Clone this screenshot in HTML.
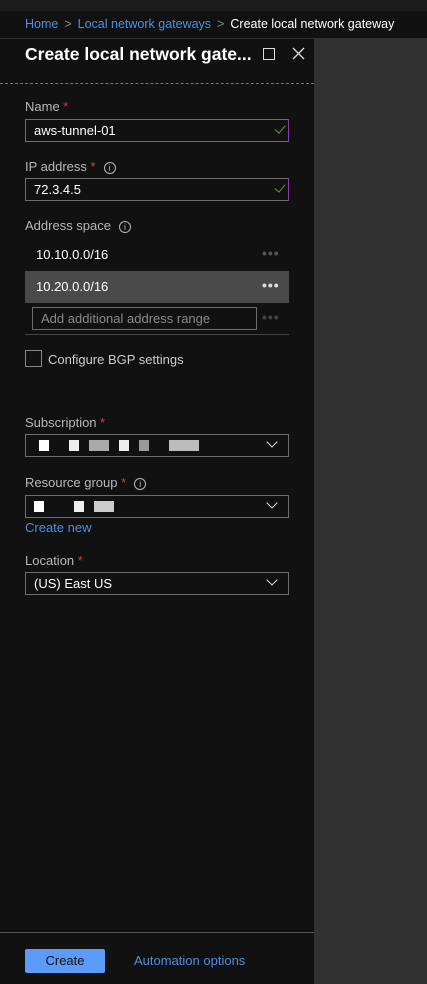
<!DOCTYPE html>
<html><head><style>
*{margin:0;padding:0;box-sizing:border-box}
body{width:427px;height:984px;background:#323232;font-family:"Liberation Sans",sans-serif;position:relative;overflow:hidden;color:#fff}
.a{position:absolute}
.top{left:0;top:0;width:427px;height:11px;background:#1c1c1c}
.bc{left:0;top:11px;width:427px;height:27px;background:#111;font-size:12.5px;line-height:27px;padding-left:25px;white-space:nowrap}
.bc .l{color:#4f8fe0}.bc .s{color:#888;margin:0 6px}
.panel{left:0;top:38px;width:314px;height:946px;background:#111;border-top:1px solid #2c2c2c}
.lab{font-size:13px;color:#b8b8b8;left:25px}
.req{color:#e03a3a}
.inp{left:25px;width:264px;height:23px;border:1px solid #6c6c6c;font-size:13px;line-height:21px;padding-left:8px;color:#fff}
.info{display:inline-block;width:12px;height:12px;border:1px solid #b8b8b8;border-radius:50%;font-size:9px;line-height:10px;text-align:center;vertical-align:middle;margin-left:8px;color:#b8b8b8}
.chk{position:absolute;right:5px;top:3px;width:6px;height:10px;border-right:1.3px solid #5aa02c;border-bottom:1.3px solid #5aa02c;transform:rotate(40deg)}
.dd{position:absolute;right:12px;top:3px;width:8px;height:8px;border-right:1.3px solid #ddd;border-bottom:1.3px solid #ddd;transform:rotate(45deg)}
.dots{font-size:14px;letter-spacing:1px;color:#ddd;font-weight:bold}
.px{position:absolute;height:11px;top:5px}
</style></head><body>
<div class="a top"></div>
<div class="a bc"><span class="l">Home</span><span class="s">&gt;</span><span class="l">Local network gateways</span><span class="s">&gt;</span>Create local network gateway</div>
<div class="a panel"></div>
<div class="a" style="left:25px;top:44px;font-size:17.5px;font-weight:bold;white-space:nowrap">Create local network gate...</div>
<div class="a" style="left:263px;top:48px;width:12px;height:12px;border:1.3px solid #ddd"></div>
<svg class="a" style="left:292px;top:47px" width="13" height="13" viewBox="0 0 13 13"><path d="M1 1L12 12M12 1L1 12" stroke="#ddd" stroke-width="1.3"/></svg>
<div class="a" style="left:0;top:83px;width:314px;border-top:1px dashed #3c8aa8"></div>

<div class="a lab" style="top:99px">Name <span class="req">*</span></div>
<div class="a inp" style="top:119px;border-right-color:#8a3aa8">aws-tunnel-01<span class="chk"></span></div>
<div class="a lab" style="top:159px">IP address <span class="req">*</span><span class="info">i</span></div>
<div class="a inp" style="top:178px;border-right-color:#8a3aa8">72.3.4.5<span class="chk"></span></div>

<div class="a lab" style="top:218px">Address space<span class="info">i</span></div>
<div class="a" style="left:36px;top:247px;font-size:13px">10.10.0.0/16</div>
<div class="a dots" style="left:262px;top:245px;color:#555">•••</div>
<div class="a" style="left:25px;top:271px;width:264px;height:32px;background:#4a4a4a"></div>
<div class="a" style="left:36px;top:279px;font-size:13px">10.20.0.0/16</div>
<div class="a dots" style="left:262px;top:277px">•••</div>
<div class="a" style="left:32px;top:307px;width:225px;height:23px;border:1px solid #6c6c6c;font-size:13px;line-height:21px;padding-left:8px;color:#8a8a8a">Add additional address range</div>
<div class="a dots" style="left:262px;top:309px;color:#444">•••</div>
<div class="a" style="left:25px;top:334px;width:264px;border-top:1px solid #444"></div>
<div class="a" style="left:25px;top:350px;width:17px;height:17px;border:1px solid #888"></div>
<div class="a" style="left:48px;top:352px;font-size:13px;color:#ccc">Configure BGP settings</div>

<div class="a lab" style="top:415px">Subscription <span class="req">*</span></div>
<div class="a inp" style="top:434px"><span class="px" style="left:13px;width:10px;background:#fff"></span><span class="px" style="left:43px;width:10px;background:#eee"></span><span class="px" style="left:63px;width:20px;background:#aaa"></span><span class="px" style="left:93px;width:10px;background:#eee"></span><span class="px" style="left:113px;width:10px;background:#999"></span><span class="px" style="left:143px;width:30px;background:#bbb"></span><span class="dd"></span></div>
<div class="a lab" style="top:475px">Resource group <span class="req">*</span><span class="info">i</span></div>
<div class="a inp" style="top:495px"><span class="px" style="left:8px;width:10px;background:#fff"></span><span class="px" style="left:48px;width:10px;background:#eee"></span><span class="px" style="left:68px;width:20px;background:#ccc"></span><span class="dd"></span></div>
<div class="a" style="left:25px;top:520px;font-size:13px;color:#4f8fe0">Create new</div>
<div class="a lab" style="top:553px">Location <span class="req">*</span></div>
<div class="a inp" style="top:572px">(US) East US<span class="dd"></span></div>

<div class="a" style="left:0;top:932px;width:314px;border-top:1px solid #555"></div>
<div class="a" style="left:25px;top:949px;width:80px;height:24px;background:#5c9cf8;border-radius:2px;color:#111;font-size:13px;text-align:center;line-height:24px">Create</div>
<div class="a" style="left:134px;top:953px;font-size:13px;color:#4f8fe0">Automation options</div>
</body></html>
